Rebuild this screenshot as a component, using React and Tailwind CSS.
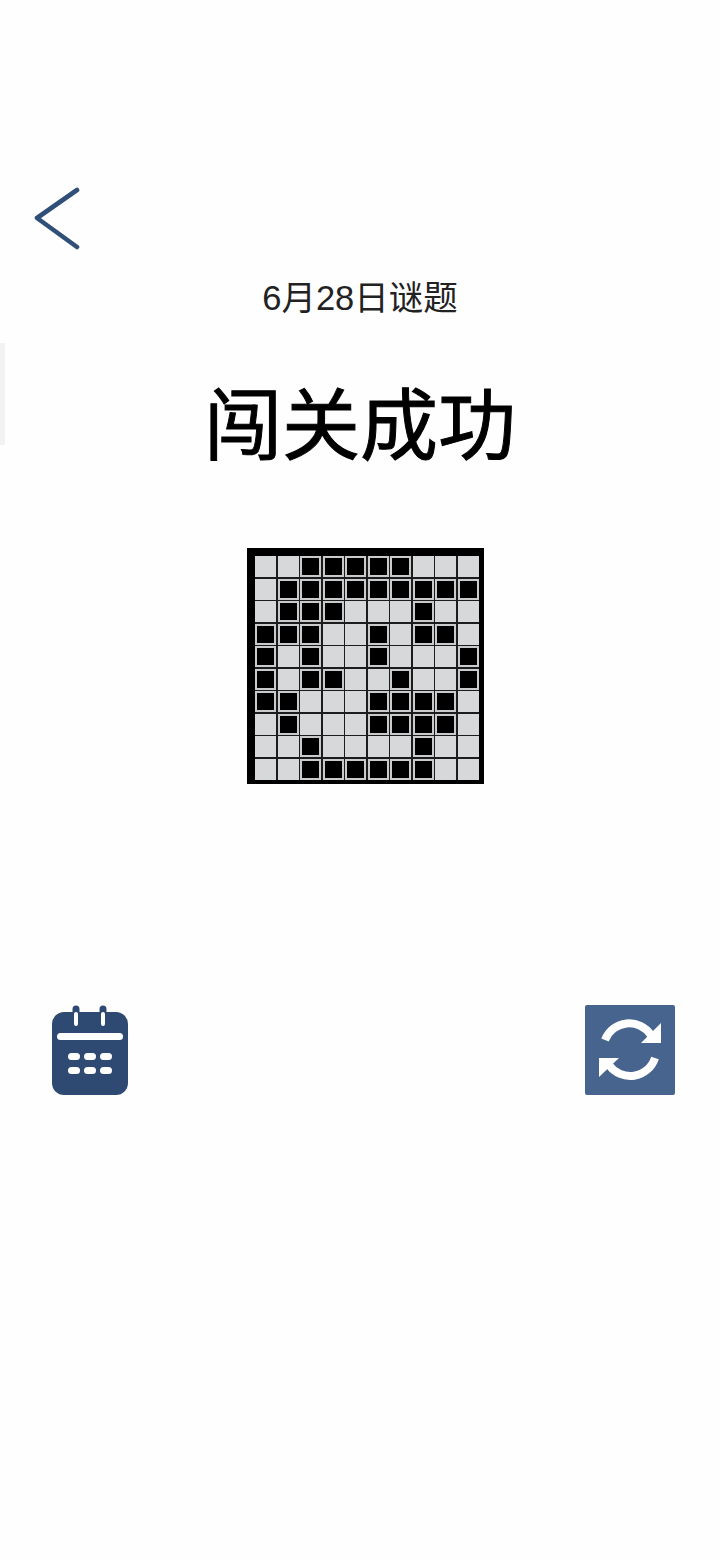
// 闯关成功页 - 每日谜题完成后的结果展示
const FILLED = [
  [2, 3, 4, 5, 6],
  [1, 2, 3, 4, 5, 6, 7, 8, 9],
  [1, 2, 3, 7],
  [0, 1, 2, 5, 7, 8],
  [0, 2, 5, 9],
  [0, 2, 3, 6, 9],
  [0, 1, 5, 6, 7, 8],
  [1, 5, 6, 7, 8],
  [2, 7],
  [2, 3, 4, 5, 6, 7],
];

function BackIcon() {
  return (
    <svg width="50" height="66" viewBox="0 0 50 66" fill="none">
      <path d="M43 4 L3 32 L43 61" stroke="#2f4f78" strokeWidth="4.6" strokeLinecap="round" strokeLinejoin="round" />
    </svg>
  );
}

function CalendarIcon() {
  return (
    <svg width="76" height="90" viewBox="0 0 76 90" fill="none">
      <rect x="0" y="7" width="76" height="83" rx="12" fill="#2f4a72" />
      <path d="M24 4 V19 M51 4 V19" stroke="#2f4a72" strokeWidth="7" strokeLinecap="round" />
      <path d="M24 9 V19 M51 9 V19" stroke="#fff" strokeWidth="4" strokeLinecap="round" />
      <rect x="5" y="28" width="66" height="7" rx="3.5" fill="#fff" />
      <g fill="#fff">
        <rect x="16" y="48" width="12" height="7" rx="3.5" />
        <rect x="32" y="48" width="12" height="7" rx="3.5" />
        <rect x="48" y="48" width="12" height="7" rx="3.5" />
        <rect x="16" y="62" width="12" height="7" rx="3.5" />
        <rect x="32" y="62" width="12" height="7" rx="3.5" />
        <rect x="48" y="62" width="12" height="7" rx="3.5" />
      </g>
    </svg>
  );
}

function RefreshIcon() {
  return (
    <svg width="90" height="90" viewBox="0 0 90 90" fill="none">
      <rect width="90" height="90" rx="2" fill="#46648d" />
      <path d="M20 35 A26 26 0 0 1 66 30" stroke="#fff" strokeWidth="8" />
      <path d="M76 18 V38 H56 Z" fill="#fff" />
      <path d="M70 53 A26 26 0 0 1 24 60" stroke="#fff" strokeWidth="8" />
      <path d="M14 53 H34 L14 72 Z" fill="#fff" />
    </svg>
  );
}

function PuzzleGrid() {
  return (
    <div className="w-[237px] h-[236px] bg-black pl-[8px] pt-[8px] pr-[5px] pb-[4px]">
      <div className="grid grid-cols-10 grid-rows-10 gap-[1.5px] w-full h-full bg-[#1c1c1c]">
        {FILLED.map((row, r) =>
          Array.from({ length: 10 }, (_, c) => (
            <div
              key={`${r}-${c}`}
              className={row.includes(c) ? 'bg-black border-2 border-[#c9cacc]' : 'bg-[#d7d8da]'}
            />
          ))
        )}
      </div>
    </div>
  );
}

export default function App() {
  return (
    <div className="relative min-h-[1560px] bg-[#fefefe] font-['Liberation_Sans','Noto_Sans_CJK_SC',sans-serif] text-[#111]">
      {/* 左侧的小标签 */}
      <div className="absolute left-0 top-[343px] w-[5px] h-[102px] bg-[#f2f2f2]" />

      <div className="pt-[186px] pl-[34px]">
        <BackIcon />
      </div>

      <div className="mt-[24px] text-center text-[34.5px] leading-[44px] text-[#222]">6月28日谜题</div>

      <h1 className="mt-[57px] text-center text-[78px] leading-[100px] font-normal text-black [-webkit-text-stroke:1px_black]">闯关成功</h1>

      <div className="mt-[71px] pl-[247px]">
        <PuzzleGrid />
      </div>

      <div className="mt-[221px] flex items-start justify-between pl-[52px] pr-[45px]">
        <CalendarIcon />
        <RefreshIcon />
      </div>
    </div>
  );
}
